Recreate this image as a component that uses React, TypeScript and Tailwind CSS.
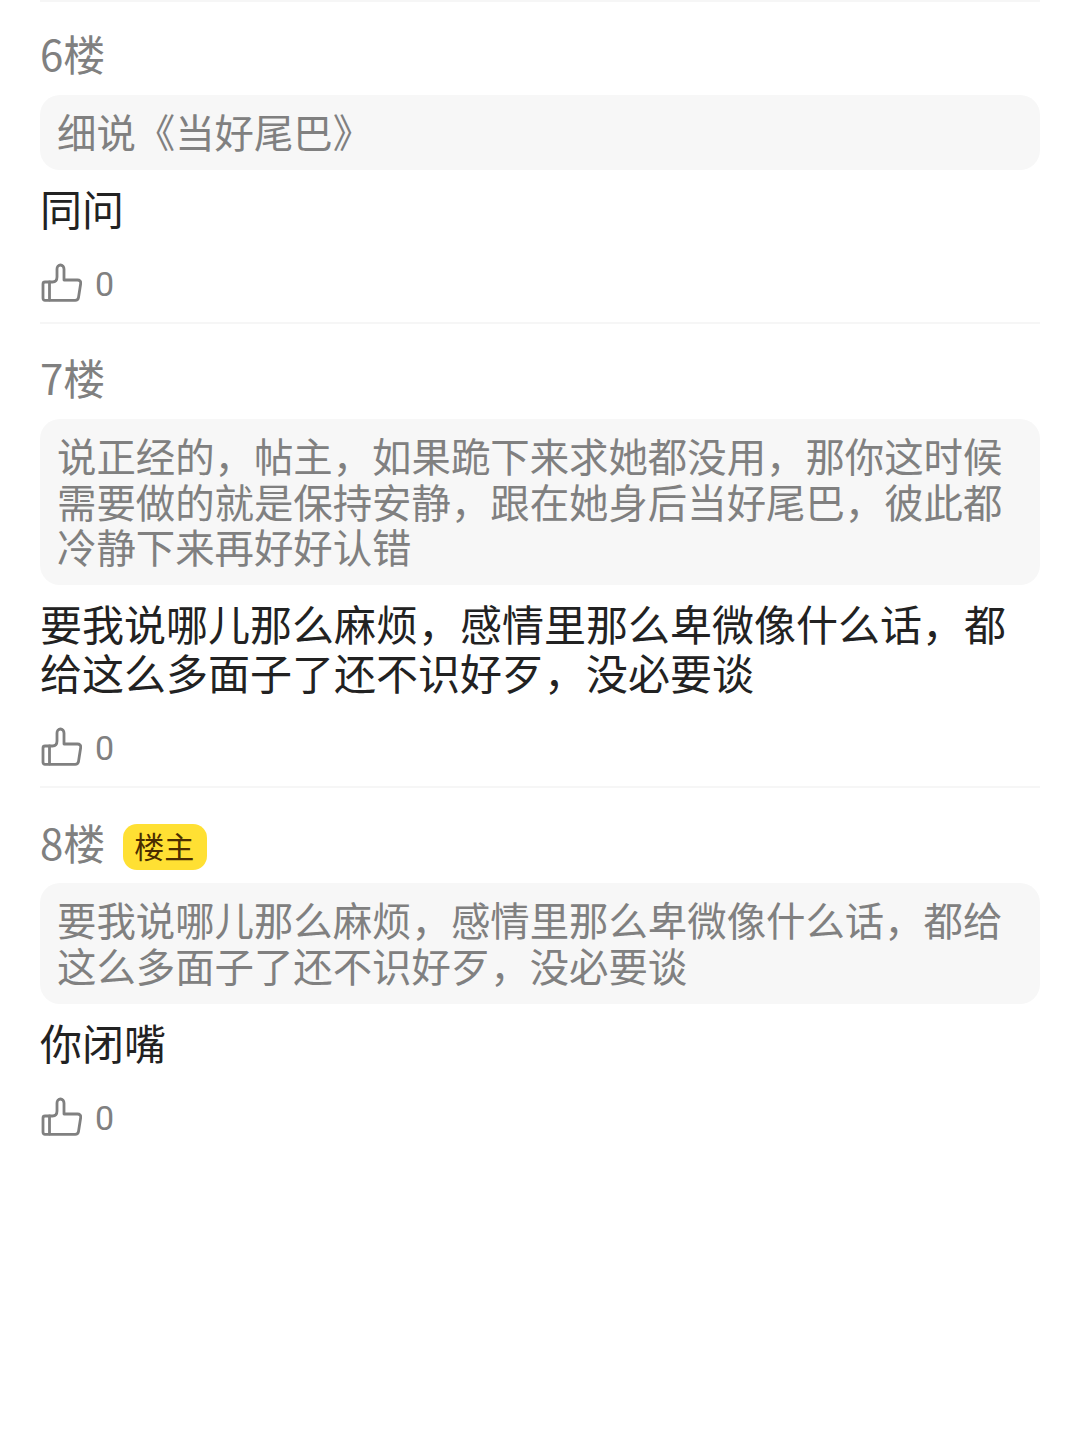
import React from "react";

const font = "font-['Noto_Sans_CJK_SC','Noto_Sans',sans-serif]";

function Thumb() {
  return (
    <svg width="42" height="42" viewBox="0 0 42 42" fill="none" stroke="#808080" strokeWidth="2.800" strokeLinejoin="round" strokeLinecap="round">
      <path d="M9.500 20v18" />
      <path d="M5 20h7.500c3 0 4.500-2 4.500-5V7c0-2.200 1.500-4 3.500-4S24 4.800 24 7v11h13.500c2.200 0 3.500 1.500 3.200 3.500L38.500 35.500c-.3 1.800-1.500 2.800-3.300 2.800H5c-1.300 0-2-.8-2-2V22c0-1.300.8-2 2-2z" />
    </svg>
  );
}

function Floor({ floor, owner, quote, body, last }: { floor: string; owner?: boolean; quote: string; body: string; last?: boolean }) {
  return (
    <div className={last ? "pt-[29px]" : "pt-[29px] first:pt-[27px] pb-[18px] border-b-2 border-[#f6f6f6]"}>
      <div className="flex items-center h-[48px]">
        <span className={owner ? "mt-[1px] text-[42px] leading-[46px] text-[#808080]" : "text-[42px] leading-[46px] text-[#808080]"}>{floor}</span>
        {owner && (
          <span className="ml-[18px] w-[84px] h-[46px] mt-[12px] pr-[2px] rounded-[14px] bg-[#ffe033] text-[30px] leading-[43px] text-center text-[#4a2c00]">楼主</span>
        )}
      </div>
      <div className="mt-[18px] rounded-[20px] bg-[#f7f7f7] px-[17px] pt-[13px] pb-[16px] text-[39.400px] leading-[45.800px] text-[#808080]">{quote}</div>
      <div className="mt-[13px] text-[42px] leading-[49px] text-[#222]">{body}</div>
      <div className="mt-[30px] flex items-center h-[42px]">
        <Thumb />
        <span className="ml-[13px] mt-[3px] text-[34px] text-[#808080] font-['Roboto',sans-serif]">0</span>
      </div>
    </div>
  );
}

export default function App() {
  return (
    <div className={`w-[1080px] h-[1440px] bg-white px-[40px] overflow-hidden ${font}`}>
      <div className="border-t-2 border-[#f6f6f6]">
        <Floor floor="6楼" quote="细说《当好尾巴》" body="同问" />
        <Floor floor="7楼" quote="说正经的，帖主，如果跪下来求她都没用，那你这时候需要做的就是保持安静，跟在她身后当好尾巴，彼此都冷静下来再好好认错" body="要我说哪儿那么麻烦，感情里那么卑微像什么话，都给这么多面子了还不识好歹，没必要谈" />
        <Floor floor="8楼" owner quote="要我说哪儿那么麻烦，感情里那么卑微像什么话，都给这么多面子了还不识好歹，没必要谈" body="你闭嘴" last />
      </div>
    </div>
  );
}
